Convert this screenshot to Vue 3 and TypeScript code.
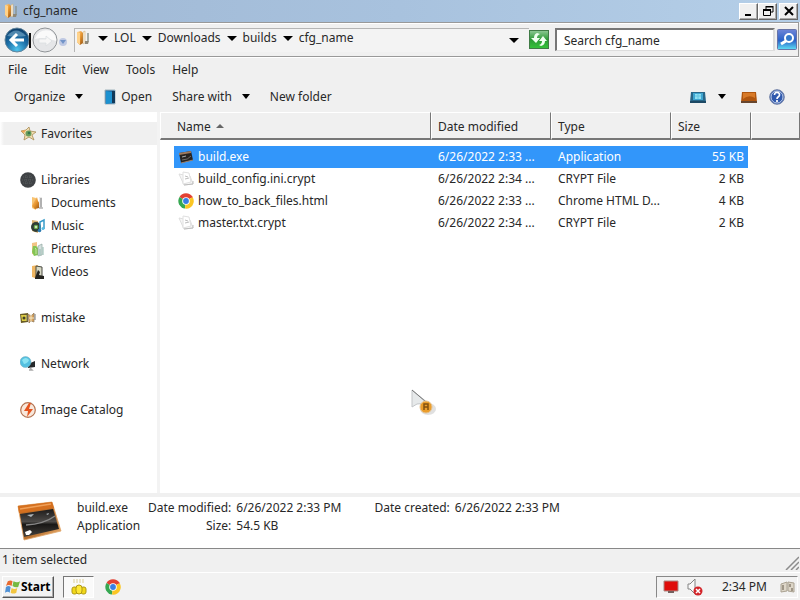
<script setup lang="ts">
import { ref } from 'vue'

interface FileRow { name: string; icon: string; date: string; type: string; size: string }
interface NavItem { label: string; icon: string; child?: boolean; gap?: boolean; active?: boolean }

const menus: string[] = ['File', 'Edit', 'View', 'Tools', 'Help']
const crumbs: string[] = ['LOL', 'Downloads', 'builds', 'cfg_name']
const nav: NavItem[] = [
  { label: 'Favorites', icon: 'star', active: true },
  { label: 'Libraries', icon: 'libs', gap: true },
  { label: 'Documents', icon: 'docs', child: true },
  { label: 'Music', icon: 'music', child: true },
  { label: 'Pictures', icon: 'pics', child: true },
  { label: 'Videos', icon: 'videos', child: true },
  { label: 'mistake', icon: 'bee', gap: true },
  { label: 'Network', icon: 'network', gap: true },
  { label: 'Image Catalog', icon: 'bolt', gap: true },
]
const files: FileRow[] = [
  { name: 'build.exe', icon: 'exeSmall', date: '6/26/2022 2:33 ...', type: 'Application', size: '55 KB' },
  { name: 'build_config.ini.crypt', icon: 'paper', date: '6/26/2022 2:34 ...', type: 'CRYPT File', size: '2 KB' },
  { name: 'how_to_back_files.html', icon: 'chrome', date: '6/26/2022 2:33 ...', type: 'Chrome HTML D...', size: '4 KB' },
  { name: 'master.txt.crypt', icon: 'paper', date: '6/26/2022 2:34 ...', type: 'CRYPT File', size: '2 KB' },
]
const selected = ref(0)
const query = ref('')
</script>

<template>
  <div class="window">
    <svg class="sprites" aria-hidden="true">
      <defs>
        <linearGradient id="gOrange" x1="0" y1="0" x2="1" y2="1"><stop offset="0" stop-color="#ffd79a" /><stop offset=".5" stop-color="#e8962f" /><stop offset="1" stop-color="#8f4c10" /></linearGradient>
        <linearGradient id="gRim" x1="0" y1="0" x2="1" y2="1"><stop offset="0" stop-color="#c4681c" /><stop offset=".6" stop-color="#b9712f" /><stop offset="1" stop-color="#f0b777" /></linearGradient>
        <linearGradient id="gDark" x1="0" y1="0" x2="0" y2="1"><stop offset="0" stop-color="#1c1a19" /><stop offset=".45" stop-color="#4d4b49" /><stop offset=".55" stop-color="#181716" /><stop offset="1" stop-color="#45413c" /></linearGradient>
        <radialGradient id="gBlue" cx=".5" cy=".9" r=".9"><stop offset="0" stop-color="#4fc3ec" /><stop offset=".5" stop-color="#1c6fa8" /><stop offset="1" stop-color="#0b3a66" /></radialGradient>
        <linearGradient id="gGreen" x1="0" y1="0" x2="0" y2="1"><stop offset="0" stop-color="#8fc996" /><stop offset=".5" stop-color="#2b9a35" /><stop offset="1" stop-color="#35c43a" /></linearGradient>
        <linearGradient id="gSearch" x1="0" y1="0" x2="0" y2="1"><stop offset="0" stop-color="#6f86d8" /><stop offset=".55" stop-color="#2a62c8" /><stop offset="1" stop-color="#5fe0f5" /></linearGradient>
      </defs>
      <symbol id="folder" viewBox="0 0 16 16">
        <path d="M2 2l4-1 2 2v10l-3 2-3-3z" fill="url(#gOrange)" /><path d="M2 2l3 1v12l-3-3z" fill="#ffd28a" /><path d="M8 2l2-1v12l-2 1z" fill="#f7f0e2" stroke="#c9a566" stroke-width=".5" /><path d="M13 3v8" stroke="#8b9692" stroke-width="1.500" /><path d="M10 11h4l-1 3h-3z" fill="#8e8878" />
      </symbol>
      <symbol id="star" viewBox="0 0 16 16">
        <path d="M1 5l5-1 3-3 1 4 6 1-4 3 2 5-5-3-5 3 1-5z" fill="#f1ddb0" stroke="#a88b54" stroke-width=".8" /><path d="M1 5l5-1-2 3z" fill="#f0a553" /><circle cx="8.500" cy="7.500" r="3" fill="#6b9e5c" /><circle cx="9" cy="7" r="1.300" fill="#35764d" />
      </symbol>
      <symbol id="libs" viewBox="0 0 16 16">
        <circle cx="8" cy="8" r="7.800" fill="#3f4245" /><path d="M3 5h10M2 8h12M3 11h10M6 3v10M10 3v10" stroke="#575a5d" stroke-dasharray="1 1" />
      </symbol>
      <symbol id="docs" viewBox="0 0 16 16">
        <path d="M2 2l4 1v12l-4-2z" fill="#f8c473" /><path d="M4 7l3-5 1 4 2 3-1 4-4 1-3-3z" fill="url(#gOrange)" /><path d="M9 2h3v11H9z" fill="#e9e9e9" /><path d="M11 3v9M9 13h4" stroke="#8d8d8d" stroke-width="1.200" />
      </symbol>
      <symbol id="music" viewBox="0 0 16 16">
        <path d="M2 2l6 1v12l-6-2z" fill="#d8b171" /><circle cx="6" cy="9" r="5" fill="#303d35" /><circle cx="6" cy="9" r="2.300" fill="#6dae50" /><circle cx="6" cy="9" r="1" fill="#e7f4df" /><path d="M10 13V4l4-2v9" fill="none" stroke="#379bc9" stroke-width="1.500" /><circle cx="9.500" cy="12.500" r="1.800" fill="#2979b0" /><circle cx="13" cy="10.500" r="1.500" fill="#58bce2" />
      </symbol>
      <symbol id="pics" viewBox="0 0 16 16">
        <path d="M2 2l5-1v13l-5-1z" fill="#f2c486" /><path d="M3 5h3l2 2v7l-4 1-2-4z" fill="#83c454" /><path d="M5 7l1 1v5" stroke="#c4e69f" fill="none" /><path d="M8 5l4-2v11l-4 1z" fill="#d4e0de" stroke="#91a6a1" stroke-width=".7" /><path d="M10 8v6M13 6v8" stroke="#91b8ad" />
      </symbol>
      <symbol id="videos" viewBox="0 0 16 16">
        <path d="M2 2l6-1v14l-6-2z" fill="#f0b763" /><path d="M6 2l6 1v10l-6 1z" fill="#d7d8c4" stroke="#4a4b42" /><path d="M5 14l3-8 2 2-1 3 5 1v3H5z" fill="#25231f" />
      </symbol>
      <symbol id="bee" viewBox="0 0 16 16">
        <path d="M0 4l8-1v9l-7 1z" fill="#695b24" /><path d="M1 5h6v6H2z" fill="#ddcd45" /><circle cx="4" cy="8" r="1.500" fill="#434126" /><path d="M8 4l3 2 3-3v9l-3-1-2 2z" fill="#d9a25b" stroke="#8a755a" stroke-width=".7" /><path d="M9 8h5M11 4v8" stroke="#f3e7c7" /><path d="M7 5v6M15 4v6" stroke="#777" />
      </symbol>
      <symbol id="network" viewBox="0 0 16 16">
        <path d="M8 8l7-3v6l-7 1z" fill="#25282a" /><path d="M10 12l2 2h-3" fill="none" stroke="#aaa" stroke-width="1.500" /><circle cx="5.500" cy="6" r="5.500" fill="#54c0e0" stroke="#78aaba" stroke-width=".5" /><path d="M2 4q4-4 7 0-1 3-5 4" fill="#8be3f2" />
      </symbol>
      <symbol id="bolt" viewBox="0 0 16 16">
        <circle cx="8" cy="8" r="7.300" fill="#f8e8dc" stroke="#b57452" stroke-width="1.200" /><path d="M9 1L4 9h4l-1 6 6-8H9l2-6z" fill="#e5541f" />
      </symbol>
      <symbol id="exe" viewBox="0 0 46 40">
        <path d="M1 5L35 1l9 29-37 9z" fill="url(#gRim)" stroke="#e0a468" stroke-width=".8" /><path d="M1 5L35 1l2 6L2 12z" fill="#d5701f" /><path d="M3 8l31-5" stroke="#f0a058" stroke-width="1.500" /><path d="M3 13l33-5 6 20-35 8z" fill="url(#gDark)" /><path d="M9 24q18-1 29-9" stroke="#888" stroke-width="1.500" fill="none" /><path d="M10 14l7-1-3 3zM29 13l3-1-1 2z" fill="#aeb6bb" /><path d="M8 31l5-2 2 2-3 3H9z" fill="#fff" />
      </symbol>
      <symbol id="exeSmall" viewBox="0 0 16 16">
        <path d="M1 4l12-2 2 9-12 3z" fill="#272421" /><path d="M1 4l12-2v2L1 6z" fill="#a0795b" /><path d="M4 8l4-1" stroke="#aaa" /><path d="M4 11q6 0 9-4" stroke="#6f6b67" fill="none" /><path d="M3 14l12-3" stroke="#9c806b" />
      </symbol>
      <symbol id="paper" viewBox="0 0 16 16">
        <path d="M1 3l5 1 6 1 3 8-9 1z" fill="#f7f7f7" stroke="#dedede" /><path d="M5 1l6 1 2 9-8 2z" fill="#fff" stroke="#e0e0e0" /><path d="M7 5l3 1M7 8l4-1M6 14l9-1v-3" fill="none" stroke="#bdbdbd" />
      </symbol>
      <symbol id="chrome" viewBox="0 0 16 16">
        <path d="M8 8L1.500 4A7.500 7.500 0 0 1 14.500 4z" fill="#e34133" /><path d="M8 8L1.500 4A7.500 7.500 0 0 0 7 15.500z" fill="#36a852" /><path d="M8 8l6.500-4A7.500 7.500 0 0 1 7 15.500z" fill="#fbc624" /><path d="M8 4h6.500" stroke="#e34133" /><circle cx="8" cy="8" r="3.800" fill="#fff" /><circle cx="8" cy="8" r="2.900" fill="#397ee5" />
      </symbol>
    </svg>

    <header class="title">
      <svg class="i16"><use href="#folder" /></svg>
      <h1>cfg_name</h1>
      <div class="controls">
        <button aria-label="Minimize"><svg viewBox="0 0 12 12"><path d="M2 10h6" stroke="#000" stroke-width="2" /></svg></button>
        <button aria-label="Restore"><svg viewBox="0 0 12 12"><path d="M4 4V2h7v5H9M3.500 1.500h8M1.500 5.500h7v5h-7z" fill="none" stroke="#000" /><path d="M1 5h8" stroke="#000" stroke-width="2" /></svg></button>
        <button class="close" aria-label="Close"><svg viewBox="0 0 12 12"><path d="M2 2l8 8M10 2l-8 8" stroke="#000" stroke-width="2" /></svg></button>
      </div>
    </header>

    <div class="address">
      <div class="history">
        <button aria-label="Back"><svg width="27" height="27" viewBox="0 0 27 27"><circle cx="13" cy="14" r="12" fill="url(#gBlue)" stroke="#64869d" /><path d="M3 10Q12-1 22 10q-9 1-19 0" fill="#8fbfdc" opacity=".5" /><path d="M20 14H8M13 8l-6 6 6 6" fill="none" stroke="#fff" stroke-width="3" /><path d="M26 7v15" stroke="#111" stroke-width="2" /></svg></button>
        <button aria-label="Forward"><svg width="27" height="27" viewBox="0 0 27 27"><circle cx="14" cy="14" r="12" fill="#e5e6e8" stroke="#919598" /><path d="M4 13Q8 2 20 5q6 5 5 10-12-5-21-2" fill="#fafafa" /><path d="M8 13h7v-3l6 5-6 5v-3H8z" fill="#f6f6f6" stroke="#d8dce0" stroke-width=".7" /></svg></button>
        <button aria-label="Recent locations"><svg width="10" height="27" viewBox="0 0 10 27"><circle cx="5" cy="16" r="4" fill="#bfc9e3" /><path d="M2 14h6l-3 4z" fill="#7294c8" /></svg></button>
      </div>
      <nav class="path" aria-label="Address">
        <svg class="i16"><use href="#folder" /></svg>
        <a v-for="c in crumbs" :key="c" href="#"><span class="down"></span>{{ c }}</a>
        <button aria-label="Previous locations"><span class="down"></span></button>
      </nav>
      <button class="go" aria-label="Refresh"><svg width="20" height="19" viewBox="0 0 20 19"><rect x=".5" y=".5" width="19" height="18" fill="url(#gGreen)" stroke="#407b46" /><path d="M8 3Q5 4 5 8H2l5 5 4-5H8q0-3 3-4zM12 16q4-1 4-5h2l-4-5-4 5h3q0 3-3 4z" fill="#effff0" /></svg></button>
      <input v-model="query" type="text" placeholder="Search cfg_name" aria-label="Search cfg_name" />
      <button class="find" aria-label="Search"><svg width="20" height="21" viewBox="0 0 20 21"><rect x=".5" y=".5" width="19" height="20" rx="1" fill="url(#gSearch)" stroke="#6774a8" /><circle cx="12" cy="9" r="4" fill="#3478ca" stroke="#fff" stroke-width="2" /><path d="M9 12l-5 3" stroke="#fff" stroke-width="3" /></svg></button>
    </div>

    <nav class="menu" aria-label="Menu"><button v-for="m in menus" :key="m">{{ m }}</button></nav>

    <div class="toolbar">
      <button>Organize <span class="down"></span></button>
      <button class="open"><svg width="14" height="16" viewBox="0 0 14 16"><path d="M2 1h10v14H2z" fill="#1d69a2" stroke="#a3b6bf" /><path d="M3 2l6 1v11l-6 1z" fill="#1c91d0" /><path d="M9 2h3v12H9z" fill="#113859" /></svg>Open</button>
      <button>Share with <span class="down"></span></button>
      <button>New folder</button>
      <div class="tools">
        <button aria-label="Views"><svg width="16" height="12" viewBox="0 0 16 12"><path d="M1 1h14l1 10H0z" fill="#286789" /><path d="M3 2h10v7H3z" fill="#3fa5d0" /><path d="M5 3h6v5H5z" fill="#8fe0f2" /><path d="M8 3v5M5 5h6" stroke="#62c4e2" /><path d="M0 10h16v2H0z" fill="#1c4864" /></svg></button>
        <button aria-label="More views"><span class="down"></span></button>
        <button class="preview" aria-label="Preview pane"><svg width="16" height="12" viewBox="0 0 16 12"><path d="M1 1h14l1 10H0z" fill="#b0560f" /><path d="M2 2h12v5Q8 3 2 8z" fill="#d87a28" /><path d="M0 10h16v2H0z" fill="#67452d" /></svg></button>
        <button aria-label="Help"><svg width="16" height="16" viewBox="0 0 16 16"><circle cx="8" cy="8" r="7.300" fill="#315aae" stroke="#7180a5" /><circle cx="8" cy="8" r="6" fill="none" stroke="#c0cee8" /><path d="M5.500 6c0-4 5.500-3 5 0 0 2-2.500 1.500-2.500 4M8 11v2" fill="none" stroke="#fff" stroke-width="1.700" /></svg></button>
      </div>
    </div>

    <main class="content">
      <nav class="side" aria-label="Navigation">
        <a v-for="n in nav" :key="n.label" href="#" :class="{ child: n.child, gap: n.gap, active: n.active }">
          <svg class="i16"><use :href="'#' + n.icon" /></svg>{{ n.label }}
        </a>
      </nav>
      <section class="list">
        <table>
          <colgroup><col class="c-name" /><col class="c-mid" /><col class="c-mid" /><col class="c-size" /><col /></colgroup>
          <thead><tr><th>Name <span class="up"></span></th><th>Date modified</th><th>Type</th><th>Size</th><th></th></tr></thead>
          <tbody>
            <tr v-for="(f, i) in files" :key="f.name" :class="{ selected: i === selected }" @click="selected = i">
              <td><div class="file"><svg class="i16"><use :href="'#' + f.icon" /></svg>{{ f.name }}</div></td>
              <td>{{ f.date }}</td><td>{{ f.type }}</td><td>{{ f.size }}</td><td></td>
            </tr>
          </tbody>
        </table>
        <svg class="pointer" width="28" height="28" viewBox="0 0 28 28" aria-hidden="true"><ellipse cx="18" cy="20" rx="8" ry="6" fill="#999" opacity=".3" /><path d="M2 1v17l5-3 11-1z" fill="#e6e9ea" stroke="#c3c6c8" /><path d="M2 1l14 12" stroke="#777" /><circle cx="16" cy="18" r="6" fill="#eb9d2b" stroke="#e5c18d" /><path d="M14 21v-6h4v6M14 18h4" fill="none" stroke="#83500f" stroke-width="1.500" /></svg>
      </section>
    </main>

    <section class="details">
      <svg width="46" height="40"><use href="#exe" /></svg>
      <div class="what"><div>build.exe</div><div>Application</div></div>
      <dl><dt>Date modified:</dt><dd>6/26/2022 2:33 PM</dd><dt>Size:</dt><dd>54.5 KB</dd></dl>
      <dl><dt>Date created:</dt><dd>6/26/2022 2:33 PM</dd></dl>
    </section>

    <div class="status"><span>1 item selected</span><svg width="14" height="14" viewBox="0 0 14 14"><path d="M1 14L14 1M6 14l8-8M11 14l3-3" stroke="#8c8c8c" stroke-width="1.500" /></svg></div>

    <footer class="taskbar">
      <button class="start"><svg width="16" height="16" viewBox="0 0 17 16"><path d="M3 2q3-2 5 0L7 7Q4 5 1 7z" fill="#e76a30" /><path d="M9 2q4 2 7 0l-2 6q-3 1-6-1z" fill="#75b943" /><path d="M1 8q3-2 5 0l-1 6q-2-2-5 0z" fill="#4f91d5" /><path d="M7 9q3 2 6 0l-1 5q-3 2-6 0z" fill="#f2c540" /></svg>Start</button>
      <button class="task" aria-label="File Explorer"><svg width="18" height="18" viewBox="0 0 18 18"><path d="M3 2h12M3 4h12" stroke="#dccf95" stroke-dasharray="2 1" /><rect x="2" y="9" width="5" height="7" rx="2" fill="#f2d819" stroke="#b09a14" /><rect x="11" y="9" width="5" height="7" rx="2" fill="#f2d819" stroke="#b09a14" /><rect x="6" y="7" width="6" height="9" rx="3" fill="#ffe838" stroke="#b09a14" /></svg></button>
      <button class="launch" aria-label="Chrome"><svg class="i16"><use href="#chrome" /></svg></button>
      <div class="tray">
        <svg width="16" height="16" viewBox="0 0 16 16"><path d="M1 2h14v10H1z" fill="#df0d0a" stroke="#a88a84" /><path d="M5 12h6v2H5z" fill="#75615e" /></svg>
        <svg width="18" height="18" viewBox="0 0 18 18"><path d="M2 6h2l5-5v15l-5-5H2z" fill="#fafafa" stroke="#848484" /><circle cx="12" cy="13" r="4.500" fill="#d3252a" /><path d="M10 11l4 4M14 11l-4 4" stroke="#fff" stroke-width="1.500" /></svg>
        <time>2:34 PM</time>
        <svg width="16" height="14" viewBox="0 0 16 14"><path d="M1 4l6-2v9l-6 1zM8 2l6 1v9l-6-1z" fill="#ddd6c8" stroke="#aaa292" /><path d="M3 5v5M10 4v3M12 8v3" stroke="#8b8172" stroke-width="1.500" /></svg>
      </div>
    </footer>
  </div>
</template>

<style>
body { margin: 0; background: #f0f0f0; }
</style>

<style scoped>
* { box-sizing: border-box; }
.window { min-height: 100vh; display: flex; flex-direction: column; background: #f0f0f0; color: #282828; font-family: "Noto Sans", "Open Sans", sans-serif; font-size: 12px; line-height: 18px; }
.sprites { display: block; width: 0; height: 0; }
button { border: 0; padding: 0; background: none; color: inherit; font: inherit; display: flex; align-items: center; }
a { color: inherit; text-decoration: none; display: flex; align-items: center; }
svg { flex: none; display: block; }
.i16 { width: 16px; height: 16px; }
.down { width: 0; height: 0; border: 4px solid transparent; border-top: 5px solid #000; border-bottom: 0; }
.title { height: 22px; display: flex; align-items: center; gap: 4px; padding: 0 2px 0 3px; background: linear-gradient(90deg, #a0b8d4, #a8c2de 50%, #b5cfe8); }
h1 { margin: 0; font-size: 12px; font-weight: 400; flex: 1; }
.controls { display: flex; }
.controls button { width: 19px; height: 17px; justify-content: center; background: #f0f0f0; border: 1px solid; border-color: #fff #666 #666 #fff; box-shadow: inset -1px -1px #aaa; }
.controls svg { width: 12px; height: 12px; }
.controls .close { margin-left: 2px; }
.address { height: 35px; margin-right: 1px; display: flex; align-items: center; border: 1px solid #999; border-width: 1px 1px 1px 0; box-shadow: inset 0 1px #fff, 0 1px #fff; padding: 0 1px 0 4px; }
.history { display: flex; width: 70px; }
.path { flex: 1; height: 24px; display: flex; align-items: center; padding-bottom: 4px; border: 1px solid #b5b5b5; border-width: 1px 0 0 1px; background: #f3f3f3; }
.path .i16 { margin-right: 1px; }
.path a .down, .path button .down { border-width: 5px 5px 0; }
.path a { gap: 6px; margin-left: 6px; }
.path button { margin: 4px 10px 0 auto; }
.go { margin-right: 6px; }
input { width: 220px; height: 23px; padding: 0 7px; border: 2px solid; border-color: #777 #ddd #ddd #777; border-bottom-width: 1px; background: #fff; font: inherit; color: #282828; outline: 0; }
input::placeholder { color: #282828; opacity: 1; }
.find { margin-left: 2px; }
.menu { height: 26px; display: flex; align-items: center; gap: 17px; padding: 0 8px; }
.toolbar { height: 29px; display: flex; align-items: center; gap: 20px; padding: 0 15px 2px 14px; }
.toolbar button { gap: 10px; }
.toolbar .open { gap: 4px; }
.tools { display: flex; align-items: center; gap: 12px; margin-left: auto; }
.tools .preview { margin-left: 3px; }
.content { flex: 1; display: flex; background: #fff; }
.side { width: 160px; flex: none; padding: 10px 0; border-right: 3px solid #f3f3f3; }
.side a { height: 23px; padding-left: 20px; gap: 5px; }
.side .child { padding-left: 30px; }
.side .gap { margin-top: 23px; }
.side .active { background: linear-gradient(90deg, #fff, #f0f0f0 4px); }
.list { flex: 1; position: relative; min-width: 0; }
table { width: 100%; table-layout: fixed; border-collapse: separate; border-spacing: 0; }
.c-name { width: 271px; }
.c-mid { width: 120px; }
.c-size { width: 80px; }
th { height: 28px; padding: 2px 0 0 6px; text-align: left; font-weight: 400; background: #f0f0f0; border: 1px solid; border-color: #fff #777 #777 #fff; border-bottom-width: 2px; }
th:first-child { padding-left: 16px; }
.up { display: inline-block; border: 4px solid transparent; border-bottom: 4px solid #666; border-top: 0; margin: 0 0 3px 2px; }
tbody::before { content: ""; display: block; height: 6px; }
td { height: 22px; padding: 0 0 0 7px; white-space: nowrap; overflow: hidden; background-clip: padding-box; }
td:first-child { border-left: 14px solid transparent; padding-left: 4px; }
td:nth-child(4) { text-align: right; border-right: 3px solid transparent; padding-right: 4px; }
.selected td:not(:last-child) { background-color: #3296fa; color: #fff; }
.file { display: flex; align-items: center; gap: 4px; }
.pointer { position: absolute; left: 250px; top: 277px; }
.details { min-height: 55px; display: flex; gap: 14px; padding: 2px 17px 4px; background: #fff; border-top: 4px solid #f0f0f0; }
.details svg { margin-top: 2px; }
.what { width: 57px; }
dl { margin: 0 19px 0 0; display: grid; grid-template-columns: auto auto; column-gap: 5px; align-content: start; }
dl:last-child { margin-right: 0; }
dt { text-align: right; }
dd { margin: 0; }
.status { height: 24px; display: flex; align-items: center; justify-content: space-between; padding: 0 1px 2px 2px; border-top: 1px solid #888; }
.status svg { align-self: flex-end; }
.taskbar { height: 28px; display: flex; align-items: center; border-top: 1px solid #fff; background: #f2f2f2; padding: 0 2px; }
.start { width: 52px; height: 22px; padding: 0 2px; font-weight: 700; color: #000; border: 1px solid; border-color: #fff #555 #555 #fff; box-shadow: inset -1px -1px #aaa; }
.task { width: 31px; height: 22px; margin-left: 9px; justify-content: center; border: 1px solid; border-color: #777 #fff #fff #777; background: #fafafa; }
.launch { margin-left: 11px; }
.tray { margin-left: auto; height: 22px; display: flex; align-items: center; gap: 7px; padding: 0 1px 0 6px; border: 1px solid; border-color: #888 #fff #fff #888; }
time { margin: 0 6px 0 11px; }
</style>
